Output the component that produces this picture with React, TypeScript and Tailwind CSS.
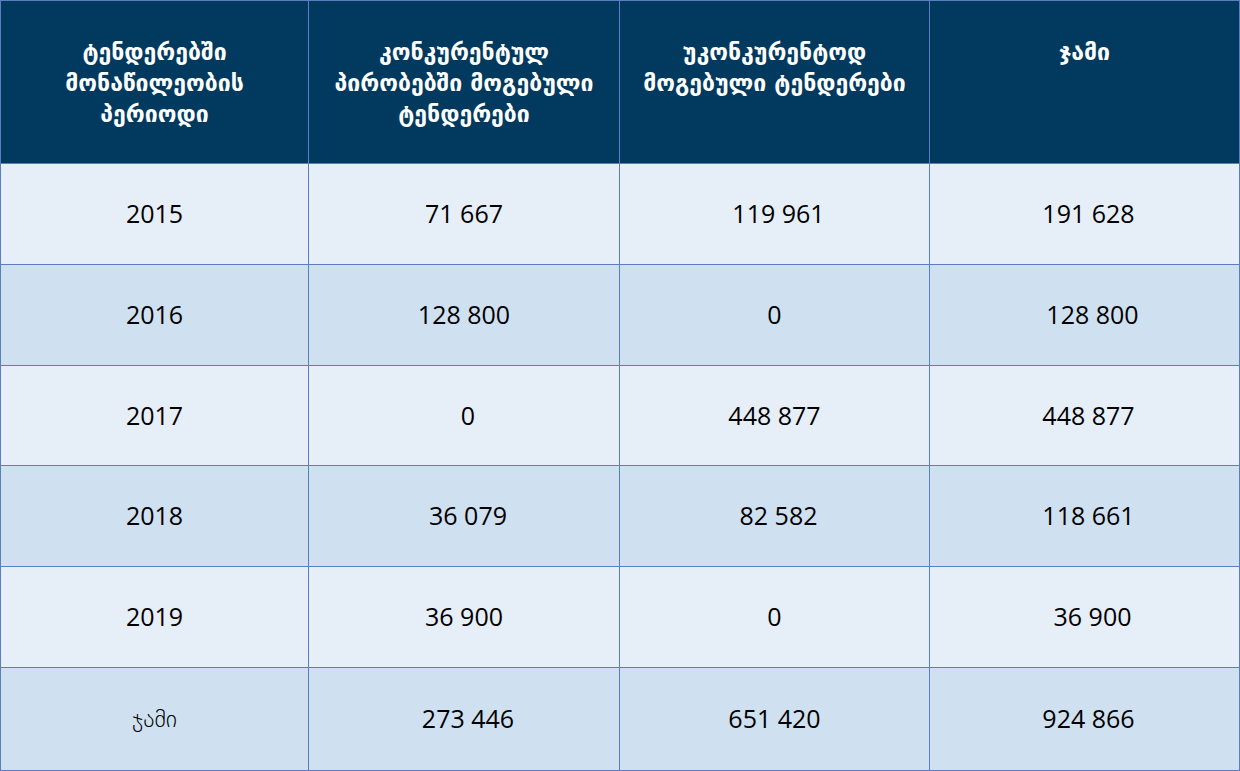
import React from "react";

const headers = [
  ["ტენდერებში", "მონაწილეობის", "პერიოდი"],
  ["კონკურენტულ", "პირობებში მოგებული", "ტენდერები"],
  ["უკონკურენტოდ", "მოგებული ტენდერები"],
  ["ჯამი"],
];

type Cell = { t: string; s?: number };
const rows: Cell[][] = [
  [{ t: "2015" }, { t: "71 667" }, { t: "119 961", s: 8 }, { t: "191 628", s: 8 }],
  [{ t: "2016" }, { t: "128 800" }, { t: "0" }, { t: "128 800", s: 16 }],
  [{ t: "2017" }, { t: "0", s: 8 }, { t: "448 877" }, { t: "448 877", s: 8 }],
  [{ t: "2018" }, { t: "36 079", s: 8 }, { t: "82 582", s: 8 }, { t: "118 661", s: 8 }],
  [{ t: "2019" }, { t: "36 900" }, { t: "0" }, { t: "36 900", s: 16 }],
  [{ t: "ჯამი" }, { t: "273 446", s: 8 }, { t: "651 420" }, { t: "924 866", s: 8 }],
];

export default function App() {
  return (
    <div className="w-[1240px] h-[771px] bg-white">
      <div className="grid grid-cols-[307px_310px_309px_309px] grid-rows-[162px_100px_100px_99px_100px_100px_102px] gap-px p-px bg-[#5b7ec2] w-[1240px] h-[771px]">
        {headers.map((h, i) => (
          <div
            key={i}
            className="bg-[#023a5f] text-white font-bold text-[23px] leading-[31px] text-center pt-[36px] flex flex-col items-center"
            style={{ fontFamily: '"DejaVu Sans", sans-serif' }}
          >
            {h.map((l, j) => (
              <span key={j} className="whitespace-nowrap">{l}</span>
            ))}
          </div>
        ))}
        {rows.map((r, ri) =>
          r.map((c, ci) => (
            <div
              key={ri + "-" + ci}
              className={
                (ri % 2 === 0 ? "bg-[#e6eef8]" : "bg-[#cfe1f0]") +
                " flex items-center justify-center text-[25px] text-black"
              }
              style={{
                fontFamily:
                  c.t === "ჯამი"
                    ? '"DejaVu Sans", sans-serif'
                    : '"Open Sans", "Noto Sans", sans-serif',
                fontSize: c.t === "ჯამი" ? 24 : undefined,
                paddingLeft: c.s ?? 0,
                fontWeight: c.t === "ჯამი" ? 300 : 400,
              }}
            >
              {c.t}
            </div>
          ))
        )}
      </div>
    </div>
  );
}
